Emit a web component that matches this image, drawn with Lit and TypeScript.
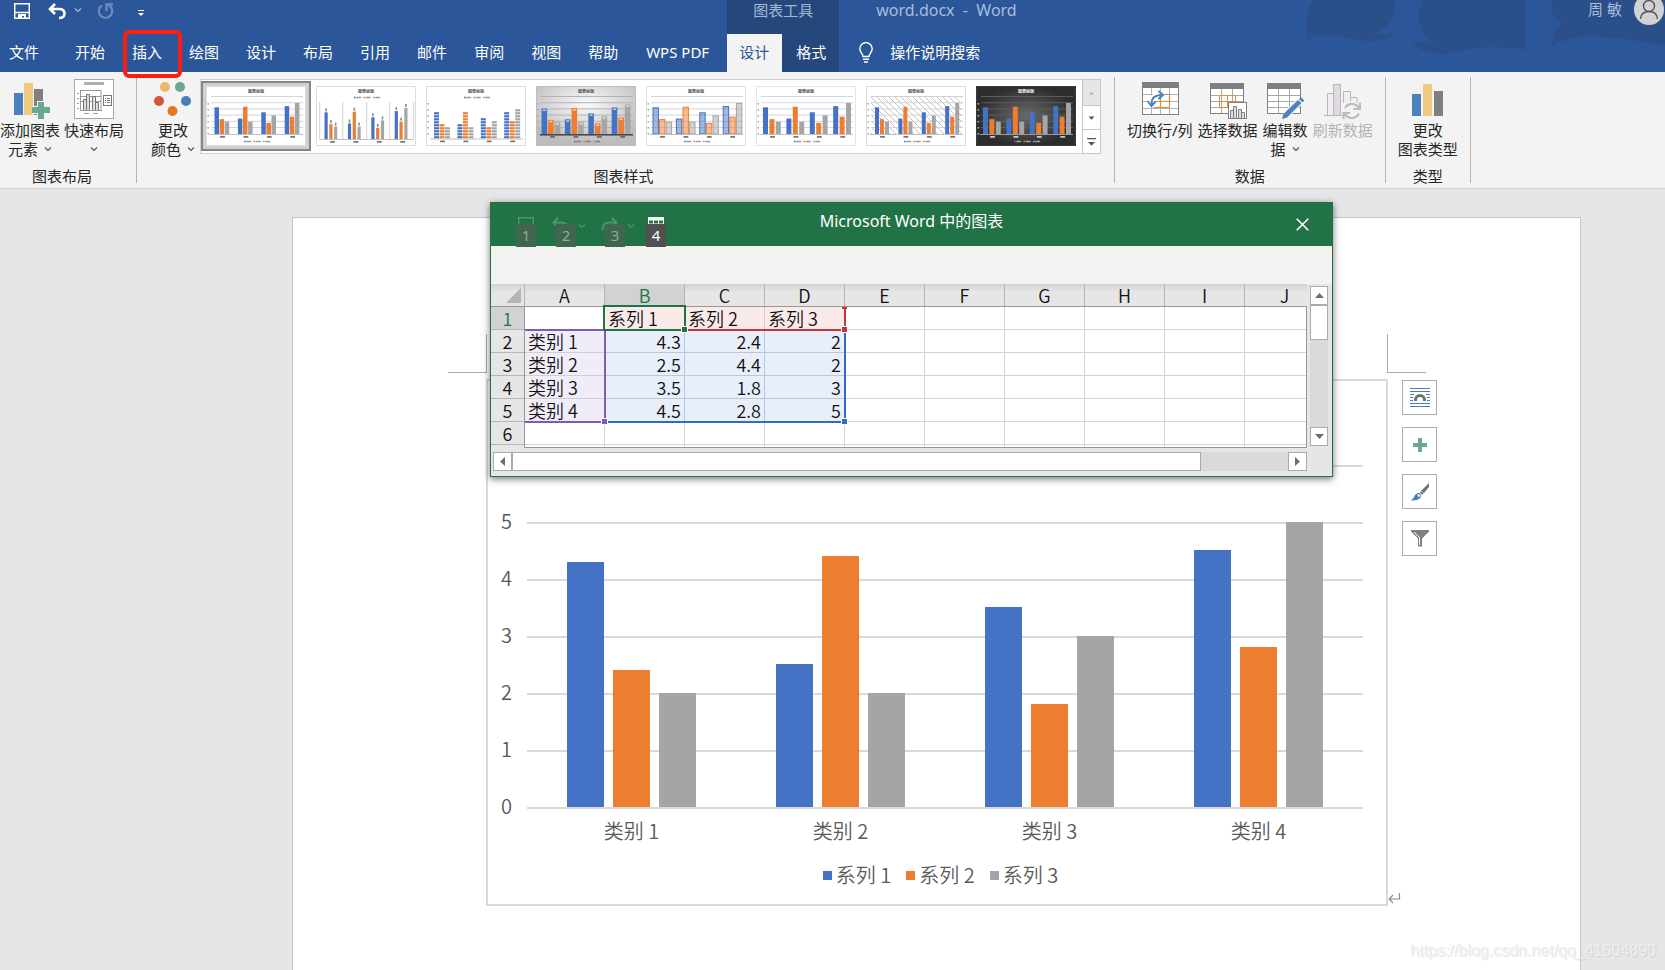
import { LitElement, html, svg, css, nothing } from "lit";
import { customElement, state } from "lit/decorators.js";
import { classMap } from "lit/directives/class-map.js";

type Row = { name: string; values: number[] };

const SERIES = ["系列 1", "系列 2", "系列 3"];
const COLORS = ["#4472c4", "#ed7d31", "#a5a5a5"];
const ROWS: Row[] = [
  { name: "类别 1", values: [4.3, 2.4, 2] },
  { name: "类别 2", values: [2.5, 4.4, 2] },
  { name: "类别 3", values: [3.5, 1.8, 3] },
  { name: "类别 4", values: [4.5, 2.8, 5] },
];
const UNIT = 57;

const chevron = html`<svg class="chev" width="8" height="6" viewBox="0 0 8 6" aria-hidden="true">
  <path d="M1 1.5 L4 4.5 L7 1.5" fill="none" stroke="currentColor" stroke-width="1.2" />
</svg>`;

/* ---------- chart style thumbnails ---------- */

@customElement("style-thumb")
export class StyleThumb extends LitElement {
  static properties = { kind: { type: Number } };
  kind = 0;

  static styles = css`
    :host { display: block; width: 100px; height: 60px; }
    svg { display: block; }
    .tiny { font-family: "Noto Sans CJK SC", sans-serif; }
  `;

  private bars() {
    const k = this.kind;
    const base = k === 1 ? 53 : k === 2 ? 52.5 : 48;
    const unit = k === 2 ? 6.1 : k === 3 ? 5.9 : 6.2;
    const w = [4.5, 3.2, 5, 5.6, 6.4, 5, 4, 5][k];
    const step = [5.1, 4.8, 5.5, 6.6, 6.6, 6.4, 5, 6.4][k];
    const start = [8.5, 8.5, 8, 5.5, 6.5, 7, 9, 7][k];
    return ROWS.map((row, c) =>
      row.values.map((v, s) => {
        const x = start + c * 23.4 + s * step;
        const h = v * unit;
        const y = base - h;
        if (k === 2) {
          const n = Math.round(h / 3);
          return Array.from({ length: n }, (_, i) =>
            svg`<rect x=${x} y=${base - 2.3 - i * 3} width=${w} height="2.2" fill=${COLORS[s]} />`);
        }
        if (k === 4) {
          return svg`<rect x=${x + 0.5} y=${y + 0.5} width=${w - 1} height=${h - 0.5} fill=${COLORS[s]} fill-opacity=".5" stroke=${COLORS[s]} />`;
        }
        return svg`<rect x=${x} y=${y} width=${w} height=${h} fill=${COLORS[s]} />
          ${k === 1 ? svg`<rect x=${x + 0.8} y=${y - 4} width="1.6" height="3" fill="#888" />` : nothing}
          ${k === 3 ? svg`<rect x=${x + 1.3} y=${y + 1} width="3" height="1.4" fill="#fff" fill-opacity=".7" />` : nothing}`;
      }));
  }

  render() {
    const k = this.kind;
    const dark = k === 7;
    const top = k === 1 || k === 2;
    const base = k === 1 ? 53 : k === 2 ? 52.5 : 48;
    const ink = dark ? "#f2f2f2" : "#555";
    const line = dark ? "#5c5c5c" : k === 3 ? "#b4b4b4" : k === 5 ? "#cfd9e6" : "#d4d4d4";
    const legendY = top ? 11.5 : 55.5;
    return html`<svg width="100" height="60" viewBox="0 0 100 60" aria-hidden="true">
      <defs>
        <radialGradient id="dk"><stop offset="0" stop-color="#6a6a6a" /><stop offset="1" stop-color="#2d2d2d" /></radialGradient>
        <radialGradient id="lt" cx=".5" cy=".3" r=".65"><stop offset="0" stop-color="#fafafa" /><stop offset="1" stop-color="#bdbdbd" /></radialGradient>
        <pattern id="hx" width="6" height="6" patternUnits="userSpaceOnUse"><path d="M0 0 L6 6" stroke="#c4c4c4" stroke-width="1" /></pattern>
      </defs>
      <rect x=".5" y=".5" width="99" height="59" fill=${dark ? "url(#dk)" : k === 3 ? "url(#lt)" : "#fff"}
        stroke=${dark ? "#3a3a3a" : k === 5 ? "#dfe5ee" : k === 3 ? "#bdbdbd" : "#dedede"} />
      ${k === 6 ? svg`<rect x="5" y="10" width="91" height="38" fill="url(#hx)" />` : nothing}
      ${k === 1
        ? [3, 26, 50, 73, 97].map((x) => svg`<rect x=${x} y="16" width="1.3" height="38" fill="#dcdcdc" />`)
        : k === 2 ? nothing
        : [10, 16.2, 22.4, 28.6, 34.8, 41].map((y) => svg`<rect x="5" y=${y} width="92" height="1" fill=${line} />`)}
      ${k === 1 ? nothing : [17, 23, 29, 35, 41, 47].map((y) => svg`<rect x="1.5" y=${y} width="1.6" height="1.6" fill="#aaa" />`)}
      ${this.bars()}
      <rect x="4" y=${base} width="93" height=${k === 3 ? 1.6 : 1} fill=${k === 3 ? "#4a4a4a" : dark ? "#999" : "#bfbfbf"} />
      <text class="tiny" x="50" y="7" font-size="4" text-anchor="middle" font-weight="700" fill=${ink}>图表标题</text>
      ${[0, 1, 2, 3].map((c) => svg`<rect x=${14 + c * 23.4} y=${base + 2} width="5" height="1.8" rx=".6" fill=${ink} fill-opacity=".8" />`)}
      ${[0, 1, 2].map((i) => svg`<rect x=${38 + i * 9.5} y=${legendY - 0.8} width="1.6" height="1.6" fill=${COLORS[i]} />
        <rect x=${40.2 + i * 9.5} y=${legendY - 0.8} width="5" height="1.6" rx=".5" fill=${ink} fill-opacity=".6" />`)}
    </svg>`;
  }
}

/* ---------- chart in the document ---------- */

@customElement("column-chart")
export class ColumnChart extends LitElement {
  static styles = css`
    :host {
      display: block; box-sizing: border-box; border: 2px solid #d9d9d9; background: #fff;
      padding: 84px 23px 17px 0; color: #595959;
      font: 20px/24px "Noto Sans CJK SC", sans-serif; font-weight: 350;
    }
    .plot { display: grid; }
    .lines, .bars { grid-area: 1 / 1; }
    .band { display: grid; grid-template-columns: 39px 1fr; height: 57px; }
    .band:last-child { height: 2px; }
    .tick { margin-top: -13px; padding-right: 15px; text-align: right; height: 24px; }
    .rule { border-top: 2px solid #d9d9d9; }
    .bars, .names { display: grid; grid-template-columns: repeat(4, 1fr); margin-left: 39px; }
    .bars { padding-bottom: 2px; }
    .cluster { display: flex; justify-content: center; align-items: flex-end; gap: 9px; }
    .bar { width: 37px; }
    .s0 { background: #4472c4; }
    .s1 { background: #ed7d31; }
    .s2 { background: #a5a5a5; }
    .names { margin-top: 10px; text-align: center; }
    .legend { display: flex; justify-content: center; gap: 15px; margin-top: 20px; padding-left: 30px; }
    .item { display: flex; align-items: center; gap: 4px; }
    .key { width: 9px; height: 9px; }
  `;

  render() {
    return html`
      <div class="plot">
        <div class="lines">
          ${[6, 5, 4, 3, 2, 1, 0].map((n) => html`<div class="band"><span class="tick">${n === 6 ? nothing : n}</span><span class="rule"></span></div>`)}
        </div>
        <div class="bars">
          ${ROWS.map((r) => html`<div class="cluster">
            ${r.values.map((v, i) => html`<div class="bar s${i}" style="height:${Math.round(v * UNIT)}px"></div>`)}
          </div>`)}
        </div>
      </div>
      <div class="names">${ROWS.map((r) => html`<span>${r.name}</span>`)}</div>
      <div class="legend">
        ${SERIES.map((s, i) => html`<span class="item"><span class="key s${i}"></span>${s}</span>`)}
      </div>`;
  }
}

/* ---------- floating data sheet window ---------- */

@customElement("data-sheet")
export class DataSheet extends LitElement {
  static styles = css`
    :host {
      display: block; box-sizing: border-box; border: 1px solid #217346; background: #e6e6e6;
      box-shadow: 0 2px 7px rgba(0, 0, 0, .55); font-family: "Noto Sans CJK SC", sans-serif;
    }
    button { border: 0; padding: 0; margin: 0; background: none; font: inherit; color: inherit; }
    svg { display: block; flex: none; }
    .title { display: grid; grid-template-columns: 1fr auto 1fr; height: 43px; background: #217346; color: #fff; }
    .caption { font: 16px/20px "Noto Sans", "Noto Sans CJK SC", sans-serif; padding-top: 8px; }
    .quick { display: flex; gap: 12px; padding: 14px 0 0 25px; align-items: flex-start; }
    .cmd { position: relative; display: flex; gap: 9px; height: 30px; padding-left: 4px; width: 37px; }
    .cmd.small { padding-left: 2px; width: 20px; }
    .cmd.off { color: #4f9270; }
    .cmd .chev { margin-top: 6px; }
    .tip {
      position: absolute; left: 8px; top: 7px; width: 20px; height: 23px; background: #505050; color: #fff;
      font: 15px/23px "Noto Sans", sans-serif; text-align: center;
    }
    .small .tip { left: 0; }
    .off .tip { background: #40664f; color: #86b098; }
    .close { justify-self: end; align-self: start; padding: 15px 23px 15px; }
    .ribbon { height: 38px; background: #f3f2f1; }
    .body { display: grid; grid-template-columns: minmax(0, 1fr) 18px; column-gap: 3px; padding: 0 4px 5px 0; }
    .view { position: relative; overflow: hidden; height: 168px; margin-top: -4px; padding-top: 4px; box-sizing: border-box; }
    table { border-collapse: separate; border-spacing: 0; table-layout: fixed; width: 834px; font-size: 18px; line-height: 22px; color: #111; font-weight: 350; }
    .rowcol { width: 34px; }
    th { font-weight: 350; padding: 0; text-align: center; background: #e6e6e6; height: 22px; }
    thead th {
      border-bottom: 1px solid #969696; border-right: 1px solid #b5b5b5; box-sizing: border-box; height: 23px; line-height: 22px;
      background: linear-gradient(#d2d2d2, #e6e6e6 8px);
    }
    tbody th { border-right: 1px solid #969696; border-bottom: 1px solid #b5b5b5; }
    thead th.cur, tbody th.cur { background: #d2d2d2; color: #217346; }
    td { background: #fff; border-right: 1px solid #d4d4d4; border-bottom: 1px solid #d4d4d4; padding: 0 3px; height: 22px; white-space: nowrap; }
    td.num { text-align: right; background: #e8effa; border-color: #bcc7d6; }
    td.cat { background: #f1edf8; border-color: #cfcbd8; }
    td.ser { background: #faeaea; border-color: #d8c8c8; }
    .rest td, .rest th { height: 3px; border-bottom: 0; }
    .corner svg { margin-left: auto; margin-right: 3px; }
    .edge { position: absolute; box-sizing: border-box; left: 33px; right: 0; bottom: 0; top: 26px; border: 1px solid #969696; pointer-events: none; }
    .range { position: absolute; box-sizing: border-box; border: 2px solid; }
    .range::after {
      content: ""; position: absolute; right: -4px; bottom: -4px; width: 5px; height: 5px; background: currentColor; border: 1px solid #fff;
    }
    .vals { left: 113px; top: 50px; width: 242px; height: 93px; color: #2f6cc8; border-top: 0; border-left: 0; }
    .cats { left: 34px; top: 49px; width: 81px; height: 94px; color: #8159b8; border-left: 0; }
    .sers { left: 112px; top: 27px; width: 243px; height: 24px; color: #c2353b; border-top: 0; border-left: 0; }
    .sers::before { content: ""; position: absolute; right: -3px; top: 0; width: 5px; height: 2px; background: currentColor; }
    .active { left: 112px; top: 25px; width: 83px; height: 26px; color: #217346; }
    .vbar { display: grid; grid-template-rows: 19px 35px 1fr 19px; height: 162px; padding-top: 2px; box-sizing: border-box; }
    .hbar { display: grid; grid-template-columns: 19px 1fr 87px 19px; height: 19px; margin: 4px 0 0 2px; }
    .arrow, .grip { background: #fff; border: 1px solid #ababab; box-sizing: border-box; display: grid; place-items: center; }
    .track { background: #dadada; }
  `;

  private arrow(d: string, label: string) {
    return html`<button class="arrow" aria-label=${label}><svg width="9" height="9" viewBox="0 0 9 9"><path d=${d} fill="#6e6e6e" /></svg></button>`;
  }

  render() {
    const cols = "ABCDEFGHIJ".split("");
    return html`
      <div class="title">
        <div class="quick">
          <button class="cmd small off" aria-label="保存">
            <svg width="16" height="16" viewBox="0 0 16 16"><path d="M.7 .7 H15.3 V15.3 H.7 Z M.7 9 H15.3" fill="none" stroke="currentColor" stroke-width="1.4" /></svg>
            <span class="tip">1</span></button>
          <button class="cmd off" aria-label="撤消">
            <svg width="17" height="16" viewBox="0 0 17 16"><path d="M6 1 L1.5 5.5 L6 10 M2 5.5 H10 Q15.5 5.5 15.5 13" fill="none" stroke="currentColor" stroke-width="2.2" /></svg>
            ${chevron}<span class="tip">2</span></button>
          <button class="cmd off" aria-label="恢复">
            <svg width="17" height="16" viewBox="0 0 17 16"><path d="M11 1 L15.5 5.5 L11 10 M15 5.5 H8 Q1.5 5.5 1.5 13" fill="none" stroke="currentColor" stroke-width="2.2" /></svg>
            ${chevron}<span class="tip">3</span></button>
          <button class="cmd small" aria-label="编辑数据">
            <svg width="16" height="8" viewBox="0 0 16 8"><rect width="16" height="8" fill="#fff" /><path d="M1 3.5 h4 v3 h-4 z M6 3.5 h4 v3 h-4 z M11 3.5 h4 v3 h-4 z" fill="#217346" /></svg>
            <span class="tip">4</span></button>
        </div>
        <div class="caption">Microsoft Word 中的图表</div>
        <button class="close" aria-label="关闭"><svg width="13" height="13" viewBox="0 0 13 13"><path d="M.7 .7 L12.3 12.3 M12.3 .7 L.7 12.3" stroke="#fff" stroke-width="1.6" /></svg></button>
      </div>
      <div class="ribbon"></div>
      <div class="body">
        <div class="view">
          <table>
            <colgroup><col class="rowcol" />${cols.map(() => html`<col />`)}</colgroup>
            <thead><tr>
              <th class="corner"><svg width="15" height="15" viewBox="0 0 15 15"><path d="M15 0 V15 H0 Z" fill="#b4b4b4" /></svg></th>
              ${cols.map((c) => html`<th scope="col" class=${classMap({ cur: c === "B" })}>${c}</th>`)}
            </tr></thead>
            <tbody>
              <tr><th scope="row" class="cur">1</th><td></td>${SERIES.map((s) => html`<td class="ser">${s}</td>`)}${cols.slice(4).map(() => html`<td></td>`)}</tr>
              ${ROWS.map((r, i) => html`<tr><th scope="row">${i + 2}</th><td class="cat">${r.name}</td>
                ${r.values.map((v) => html`<td class="num">${v}</td>`)}${cols.slice(4).map(() => html`<td></td>`)}</tr>`)}
              <tr><th scope="row">6</th>${cols.map(() => html`<td></td>`)}</tr>
              <tr class="rest"><th></th>${cols.map(() => html`<td></td>`)}</tr>
            </tbody>
          </table>
          <div class="edge"></div>
          <div class="range vals"></div><div class="range cats"></div><div class="range sers"></div><div class="range active"></div>
        </div>
        <div class="vbar">
          ${this.arrow("M0 7 L4.5 2 L9 7 Z", "向上滚动")}<div class="grip"></div><div class="track"></div>${this.arrow("M0 2 L4.5 7 L9 2 Z", "向下滚动")}
        </div>
        <div class="hbar">
          ${this.arrow("M7 0 L2 4.5 L7 9 Z", "向左滚动")}<div class="grip"></div><div class="track"></div>${this.arrow("M2 0 L7 4.5 L2 9 Z", "向右滚动")}
        </div>
      </div>`;
  }
}

/* ---------- icons for the ribbon ---------- */

const sheetIcon = (extra: unknown) => html`<svg width="40" height="40" viewBox="0 0 40 40" aria-hidden="true">
  <rect x="2.5" y="4.5" width="33" height="30" fill="#fff" stroke="#7f7f7f" />
  <path d="M13.5 10 V34 M24.5 10 V34 M3 16.5 H35 M3 22.5 H35 M3 28.5 H35" stroke="#a8a8a8" fill="none" />
  <rect x="2" y="4" width="34" height="6" fill="#7f7f7f" />${extra}</svg>`;

const icons = {
  addElement: html`<svg width="40" height="40" viewBox="0 0 40 40" aria-hidden="true">
    <rect x="4" y="14" width="9" height="22" fill="#4a82bd" /><rect x="14" y="4" width="9" height="32" fill="#efc97e" />
    <rect x="24" y="10" width="9" height="26" fill="#7f7f7f" />
    <path d="M27 22 h8 v5 h5 v8 h-5 v5 h-8 v-5 h-5 v-8 h5 z" fill="#f3f3f3" />
    <path d="M28 23 h6 v5 h6 v6 h-6 v6 h-6 v-6 h-6 v-6 h6 z" fill="#6ba892" /></svg>`,
  quickLayout: html`<svg width="40" height="40" viewBox="0 0 40 40" aria-hidden="true">
    <rect x=".5" y=".5" width="39" height="39" fill="#fff" stroke="#a6a6a6" /><rect x="10" y="3" width="20" height="3" fill="#b0b0b0" />
    <path d="M7 11.5 H27 V31 M6.5 11 V31.5 H28 M7 17.5 H27 M7 22.5 H27 M10 34.5 h5 M19 34.5 h5 M3 14.5 h2 M3 19.5 h2 M3 24.5 h2 M3 29.5 h2" fill="none" stroke="#9a9a9a" />
    <path d="M9.5 31 V20.5 h3 V31 M12.5 31 V15.5 h3 V31 M18.5 31 V17.5 h3 V31 M21.5 31 V23.5 h3 V31" fill="#ddd" stroke="#767676" />
    <rect x="29.5" y="16.5" width="8" height="10" fill="#fff" stroke="#767676" />
    <path d="M31 19.5 h1 M33 19.5 h3 M31 21.5 h1 M33 21.5 h3 M31 23.5 h1 M33 23.5 h3" stroke="#767676" /></svg>`,
  colors: html`<svg width="40" height="40" viewBox="0 0 40 40" aria-hidden="true">
    <circle cx="12" cy="8" r="5" fill="#ebb865" /><circle cx="27" cy="8" r="5" fill="#6ba892" /><circle cx="6" cy="22" r="5" fill="#d65532" />
    <circle cx="33" cy="22" r="5" fill="#447fba" /><circle cx="19.5" cy="32" r="5" fill="#e8781e" /></svg>`,
  swap: html`<svg width="40" height="40" viewBox="0 0 40 40" aria-hidden="true">
    <rect x="2.5" y="3.5" width="36" height="32" fill="#fff" stroke="#7f7f7f" />
    <path d="M11.5 9 V35 M20.5 9 V35 M29.5 9 V35 M3 15.500 H38 M3 22.500 H38 M3 29.500 H38" stroke="#b4b4b4" fill="none" />
    <rect x="2" y="3" width="37" height="6" fill="#7f7f7f" />
    <path d="M13 15.500 H29.500 V28.500 H13 M20.500 15.500 V28.500 M13 22.500 H29.500" fill="none" stroke="#e8893c" stroke-width="1.200" />
    <path d="M11.500 25 Q11.500 15.500 22 16" fill="none" stroke="#fff" stroke-width="6" />
    <path d="M11.500 26 Q11 15.500 22.500 16 M18.500 12 L23 16 L18.500 20 M7.500 22 L11.500 27 L15.500 22.500" fill="none" stroke="#4a82bd" stroke-width="2" /></svg>`,
  select: sheetIcon(svg`<path d="M11.500 16.500 H27.500 V28.500 H11.500 Z M19.500 16.500 V28.500 M11.500 22.500 H27.500" fill="none" stroke="#e8893c" />
    <rect x="20.500" y="23.500" width="18" height="16" fill="#fff" stroke="#7f7f7f" />
    <path d="M22.500 39 V31.500 h3 V39 M25.500 39 V27.500 h3 V39 M30.500 39 V30.500 h3 V39 M33.500 39 V33.500 h3 V39" fill="#ddd" stroke="#7f7f7f" />`),
  edit: sheetIcon(svg`<path d="M17 39.500 L19 33 L34 18 L39.500 23 L24 38 Z" fill="#f3f3f3" />
    <path d="M17 40 L18.500 35 L33 21 L36.500 24 L22 38.500 Z M34 20 L36 18.300 L39.500 21.500 L37.500 23.300 Z" fill="#4a82bd" />`),
  refresh: html`<svg width="40" height="40" viewBox="0 0 40 40" aria-hidden="true">
    <path d="M4.500 36 V14.500 h6 V36 M20.500 24 V12.500 h7 V24 M28 18.500 h6 V24 M1 36.500 H19" fill="#f4eef4" stroke="#b9b5b9" />
    <rect x="10.500" y="5.500" width="7" height="31" fill="#dfdadf" stroke="#b9b5b9" />
    <circle cx="29" cy="32" r="10" fill="#f3f3f3" />
    <path d="M22 29 Q25 24.500 30 25 Q34 25.500 36 29 M36 34.500 Q33 39.500 28 39 Q24 38.500 21.500 35 M37 23.500 V30 H30.500 M20.500 40.500 V34 H27" fill="none" stroke="#bdbbbd" stroke-width="2.200" /></svg>`,
  chartType: html`<svg width="40" height="40" viewBox="0 0 40 40" aria-hidden="true">
    <rect x="4" y="15" width="9" height="22" fill="#4a82bd" /><rect x="15" y="5" width="9" height="32" fill="#efc97e" /><rect x="26" y="12" width="9" height="25" fill="#7f7f7f" /></svg>`,
};

/* ---------- application ---------- */

@customElement("app-root")
export class AppRoot extends LitElement {
  @state() private picked = 0;

  static styles = css`
    :host {
      display: flex; flex-direction: column; height: 100vh; overflow: hidden; background: #e6e6e6; position: relative;
      font: 15px/19px "Noto Sans", "Noto Sans CJK SC", sans-serif; color: #262626;
    }
    button { border: 0; padding: 0; margin: 0; background: none; font: inherit; color: inherit; }
    svg { display: block; flex: none; }

    .head { position: relative; display: flex; height: 72px; background: #2b579a; color: #fff; flex: none; }
    .clouds { position: absolute; right: 0; top: 0; }
    .left, .ctx, .right { display: grid; grid-template-rows: 34px 38px; position: relative; }
    .right { flex: 1; }
    .qat { display: flex; padding-left: 14px; align-items: flex-start; }
    .qat button { padding-top: 3px; }
    .undo { margin-left: 18px; display: flex; gap: 8px; }
    .undo .chev { margin-top: 4px; opacity: .6; }
    .redo { margin-left: 15px; opacity: .3; }
    .more { margin-left: 24px; }
    .tabs { display: flex; gap: 1px; }
    .tab { display: grid; place-items: center; padding: 0 13px 2px; text-align: center; position: relative; line-height: 20px; white-space: nowrap; }
    .file { padding: 0 9px 2px; margin-right: 13px; }
    .wps { margin-right: 4px; padding: 0 0 2px; width: 91px; }
    .mark { position: absolute; left: 4px; top: -4px; width: 51px; height: 40px; border: 4px solid #fc1d12; border-radius: 6px; z-index: 2; }
    .ctx { background: #24477c; }
    .ctxname { text-align: center; color: #a4b7d4; line-height: 21px; }
    .on { background: #f3f3f3; color: #2b579a; padding-left: 12px; }
    .bar { display: flex; justify-content: space-between; color: #a9bedb; line-height: 20px; padding-left: 37px; }
    .user { display: flex; gap: 12px; line-height: 19px; }
    .avatar { margin-top: -6px; margin-right: 1px; }
    .doc { white-space: pre; font-size: 16px; }
    .tell { display: flex; align-items: center; gap: 17px; padding: 0 0 2px 20px; justify-self: start; }

    .ribbon { display: flex; flex: none; height: 106px; padding: 5px 0; background: #f3f3f3; border-bottom: 1px solid #d2d2d2; }
    .group { display: flex; flex-direction: column; border-right: 1px solid #b4b4b4; height: 106px; }
    .items { display: flex; flex: 1; }
    .name { text-align: center; line-height: 18px; height: 16px; }
    .layout { padding-right: 12px; }
    .layout .items { gap: 4px; }
    .styles { padding: 0 13px 0 9px; }
    .data { padding: 0 12px; }
    .data .items { gap: 5px; }
    .big { display: flex; flex-direction: column; align-items: center; padding-top: 2px; white-space: nowrap; justify-content: flex-start; }
    .big svg:first-child { margin-bottom: 2px; }
    .w60 { width: 60px; }
    .w54 { width: 54px; }
    .line { display: flex; align-items: center; gap: 6px; height: 19px; }
    .chev { color: #555; }
    .head .chev { color: #fff; }
    .dim { color: #b3b3b3; }
    .gallery { display: flex; height: 75px; box-sizing: border-box; border: 1px solid #d0d0d0; background: #fff; margin-top: 2px; }
    .pick { width: 110px; height: 70px; margin-top: 1px; padding: 5px; box-sizing: border-box; }
    .pick.sel { border: 2px solid #868686; background: #d0d0ce; padding: 3px; }
    .scroll { display: grid; grid-template-rows: 26px 24px 1fr; margin: -1px -1px -1px 1px; width: 19px; }
    .scroll button { border: 1px solid #c6c6c6; background: #fff; display: grid; place-items: center; margin-bottom: -1px; }
    .scroll button:first-child { background: #e6e6e6; }
    .scroll button:last-child { margin-bottom: 0; }

    .work { position: relative; flex: 1; min-height: 0; display: flex; padding: 28px 84px 0 292px; }
    .page { flex: 1; background: #fff; border: 1px solid #c6c6c6; border-bottom: 0; padding: 116px 154px 0 155px; }
    .marks { display: flex; justify-content: space-between; margin-bottom: 6px; }
    .corner { width: 38px; height: 38px; border: 0 solid #ababab; border-bottom-width: 1px; }
    .corner.l { border-right-width: 1px; }
    .corner.r { border-left-width: 1px; }
    .row { display: flex; margin: 0 -11px 0 38px; }
    .row column-chart { flex: 1; }
    .ret { align-self: flex-end; width: 14px; }
    .side { display: flex; flex-direction: column; gap: 12px; padding-top: 1px; }
    .side button { width: 35px; height: 35px; border: 1px solid #ababab; background: #fff; display: grid; place-items: center; }
    .sheet { position: absolute; left: 490px; top: 13px; width: 843px; }
    .watermark {
      position: absolute; right: 9px; bottom: 8px; font: 16px/22px "Liberation Sans", sans-serif;
      color: #efefef; text-shadow: 1px 1px 1px rgba(0, 0, 0, .1);
    }
  `;

  private tab(name: string, extra: unknown = nothing, cls = "") {
    return html`<button class="tab ${cls}">${name}${extra}</button>`;
  }

  render() {
    return html`
      <header class="head">
        <svg class="clouds" width="360" height="72" viewBox="0 0 360 72" aria-hidden="true">
          <g fill="#2b4f88">
            <path d="M8 0 C-2 14 4 24 2 40 C18 30 30 37 46 38 C60 44 84 42 90 33 C78 34 72 36 66 34 C84 30 90 20 90 0 Z" />
            <path d="M118 0 C108 20 118 36 130 43 C122 44 112 42 107 40 C112 52 128 54 142 53 C160 52 172 44 200 48 Q214 46 220 51 V0 Z" />
            <path d="M247 0 C244 14 252 20 258 23 C250 28 247 36 247 46 C262 38 280 34 296 37 C320 36 336 44 360 45 V0 Z" />
          </g>
        </svg>
        <div class="left">
          <div class="qat">
            <button aria-label="保存"><svg width="16" height="16" viewBox="0 0 16 16"><path d="M.7 .7 H15.3 V15.3 H.7 Z M1 9.500 H15" fill="none" stroke="#fff" stroke-width="1.500" /><path d="M4 11 h8 v5 h-2 v-3 h-2 v3 h-4 z" fill="#fff" /></svg></button>
            <button class="undo" aria-label="撤消"><svg width="18" height="17" viewBox="0 0 18 17"><path d="M7 1 L2 6 L7 11 M2 6 H11 Q16.500 6 16.500 10.500 Q16.500 15 11 15" fill="none" stroke="#fff" stroke-width="2.600" /></svg>${chevron}</button>
            <button class="redo" aria-label="重复"><svg width="17" height="17" viewBox="0 0 17 17"><path d="M5 2.500 A6.700 6.700 0 1 0 12 2.500 M9.500 8 V1.500 H16" fill="none" stroke="#fff" stroke-width="2.400" /></svg></button>
            <button class="more" aria-label="自定义快速访问工具栏"><svg width="6" height="14" viewBox="0 0 6 14"><path d="M0 7.500 H6" stroke="#fff" /><path d="M0 10 H6 L3 13 Z" fill="#fff" /></svg></button>
          </div>
          <nav class="tabs">
            ${this.tab("文件", nothing, "file")}${this.tab("开始")}${this.tab("插入", html`<span class="mark"></span>`)}
            ${["绘图", "设计", "布局", "引用", "邮件", "审阅", "视图", "帮助"].map((t) => this.tab(t))}
            ${this.tab("WPS PDF", nothing, "wps")}
          </nav>
        </div>
        <div class="ctx">
          <div class="ctxname">图表工具</div>
          <nav class="tabs">${this.tab("设计", nothing, "on")}${this.tab("格式")}</nav>
        </div>
        <div class="right">
          <div class="bar">
            <span class="doc">word.docx  -  Word</span>
            <span class="user">周 敏
              <svg class="avatar" width="30" height="31" viewBox="0 0 30 31" aria-hidden="true"><ellipse cx="15" cy="15.500" rx="15" ry="15.500" fill="#d2d2d2" />
                <circle cx="15" cy="12" r="5.500" fill="none" stroke="#555" stroke-width="1.400" /><path d="M6.500 25 Q7 17.500 15 17.500 Q23 17.500 23.500 25" fill="none" stroke="#555" stroke-width="1.400" /></svg></span>
          </div>
          <button class="tell"><svg width="14" height="21" viewBox="0 0 14 21"><path d="M4 14.500 C4 11.500 .8 10.500 .8 6.800 A6.200 6.200 0 0 1 13.200 6.800 C13.200 10.500 10 11.500 10 14.500 Z M4 17.300 H10 M5 20 H9" fill="none" stroke="#fff" stroke-width="1.400" /></svg>操作说明搜索</button>
        </div>
      </header>

      <section class="ribbon">
        <div class="group layout">
          <div class="items">
            <button class="big w60">${icons.addElement}<span class="line">添加图表</span><span class="line">元素 ${chevron}</span></button>
            <button class="big w60">${icons.quickLayout}<span class="line">快速布局</span><span class="line">${chevron}</span></button>
          </div>
          <div class="name">图表布局</div>
        </div>
        <div class="group styles">
          <div class="items">
            <button class="big w54">${icons.colors}<span class="line">更改</span><span class="line">颜色 ${chevron}</span></button>
            <div class="gallery">
              ${[0, 1, 2, 3, 4, 5, 6, 7].map((k) => html`<button class=${classMap({ pick: true, sel: k === this.picked })} aria-label="样式 ${k + 1}"
                @click=${() => (this.picked = k)}><style-thumb .kind=${k}></style-thumb></button>`)}
              <div class="scroll">
                <button aria-label="上一行"><svg width="7" height="4" viewBox="0 0 7 4"><path d="M1 3.500 L3.500 1 L6 3.500 Z" fill="#b0b0b0" /></svg></button>
                <button aria-label="下一行"><svg width="7" height="4" viewBox="0 0 7 4"><path d="M.5 .5 H6.500 L3.500 3.800 Z" fill="#555" /></svg></button>
                <button aria-label="其他"><svg width="9" height="8" viewBox="0 0 9 8"><path d="M0 0 H9 V1.200 H0 Z M1 4 H8 L4.500 7.800 Z" fill="#555" /></svg></button>
              </div>
            </div>
          </div>
          <div class="name">图表样式</div>
        </div>
        <div class="group data">
          <div class="items">
            <button class="big">${icons.swap}<span class="line">切换行/列</span></button>
            <button class="big">${icons.select}<span class="line">选择数据</span></button>
            <button class="big">${icons.edit}<span class="line">编辑数</span><span class="line">据 ${chevron}</span></button>
            <button class="big dim" disabled>${icons.refresh}<span class="line">刷新数据</span></button>
          </div>
          <div class="name">数据</div>
        </div>
        <div class="group data">
          <div class="items">
            <button class="big">${icons.chartType}<span class="line">更改</span><span class="line">图表类型</span></button>
          </div>
          <div class="name">类型</div>
        </div>
      </section>

      <main class="work">
        <div class="page">
          <div class="marks"><span class="corner l"></span><span class="corner r"></span></div>
          <div class="row">
            <column-chart></column-chart>
            <svg class="ret" width="14" height="14" viewBox="0 0 14 14" aria-hidden="true"><path d="M11.500 1 V7 H1.500 M5 3 L1.200 7 L5 11" fill="none" stroke="#8a8a8a" stroke-width="1.200" /></svg>
            <div class="side">
              <button aria-label="布局选项"><svg width="20" height="20" viewBox="0 0 20 20"><path d="M0 .5 H20 M0 3.500 H20 M0 6.500 H4 M16 6.500 H20 M0 9.500 H3 M17 9.500 H20 M0 12.500 H3 M17 12.500 H20 M0 15.500 H20 M0 18.500 H20" stroke="#447fba" /><path d="M5.500 13 V12 A4.500 4.500 0 0 1 14.500 12 V13" fill="none" stroke="#737373" stroke-width="3" /></svg></button>
              <button aria-label="图表元素"><svg width="14" height="14" viewBox="0 0 14 14"><path d="M5 0 h4 v5 h5 v4 h-5 v5 h-4 v-5 h-5 v-4 h5 z" fill="#6ba892" /></svg></button>
              <button aria-label="图表样式"><svg width="18" height="18" viewBox="0 0 18 18"><path d="M18 0 L18 4 L13 10 L10 8 Z" fill="#737373" /><path d="M9.500 9 L12 11" stroke="#737373" stroke-width="2" /><path d="M0 17.500 Q3 15 4 12 Q6 9.500 8.500 10 Q11 12 10 14 Q8 17.500 0 17.500 Z" fill="#447fba" /><path d="M6 12 Q8 10.500 9.500 12.500 Q9 14 7.500 14.500 Q8 13 6 12 Z" fill="#fff" /></svg></button>
              <button aria-label="图表筛选器"><svg width="18" height="17" viewBox="0 0 18 17"><path d="M0 0 H18 V1.500 L11 8.500 V16.500 H7 V8.500 L0 1.500 Z" fill="#7f7f7f" /><path d="M3 2 L8.500 7.500 V15" fill="none" stroke="#fff" /></svg></button>
            </div>
          </div>
        </div>
        <data-sheet class="sheet"></data-sheet>
      </main>
      <div class="watermark">https://blog.csdn.net/qq_41604890</div>`;
  }
}
